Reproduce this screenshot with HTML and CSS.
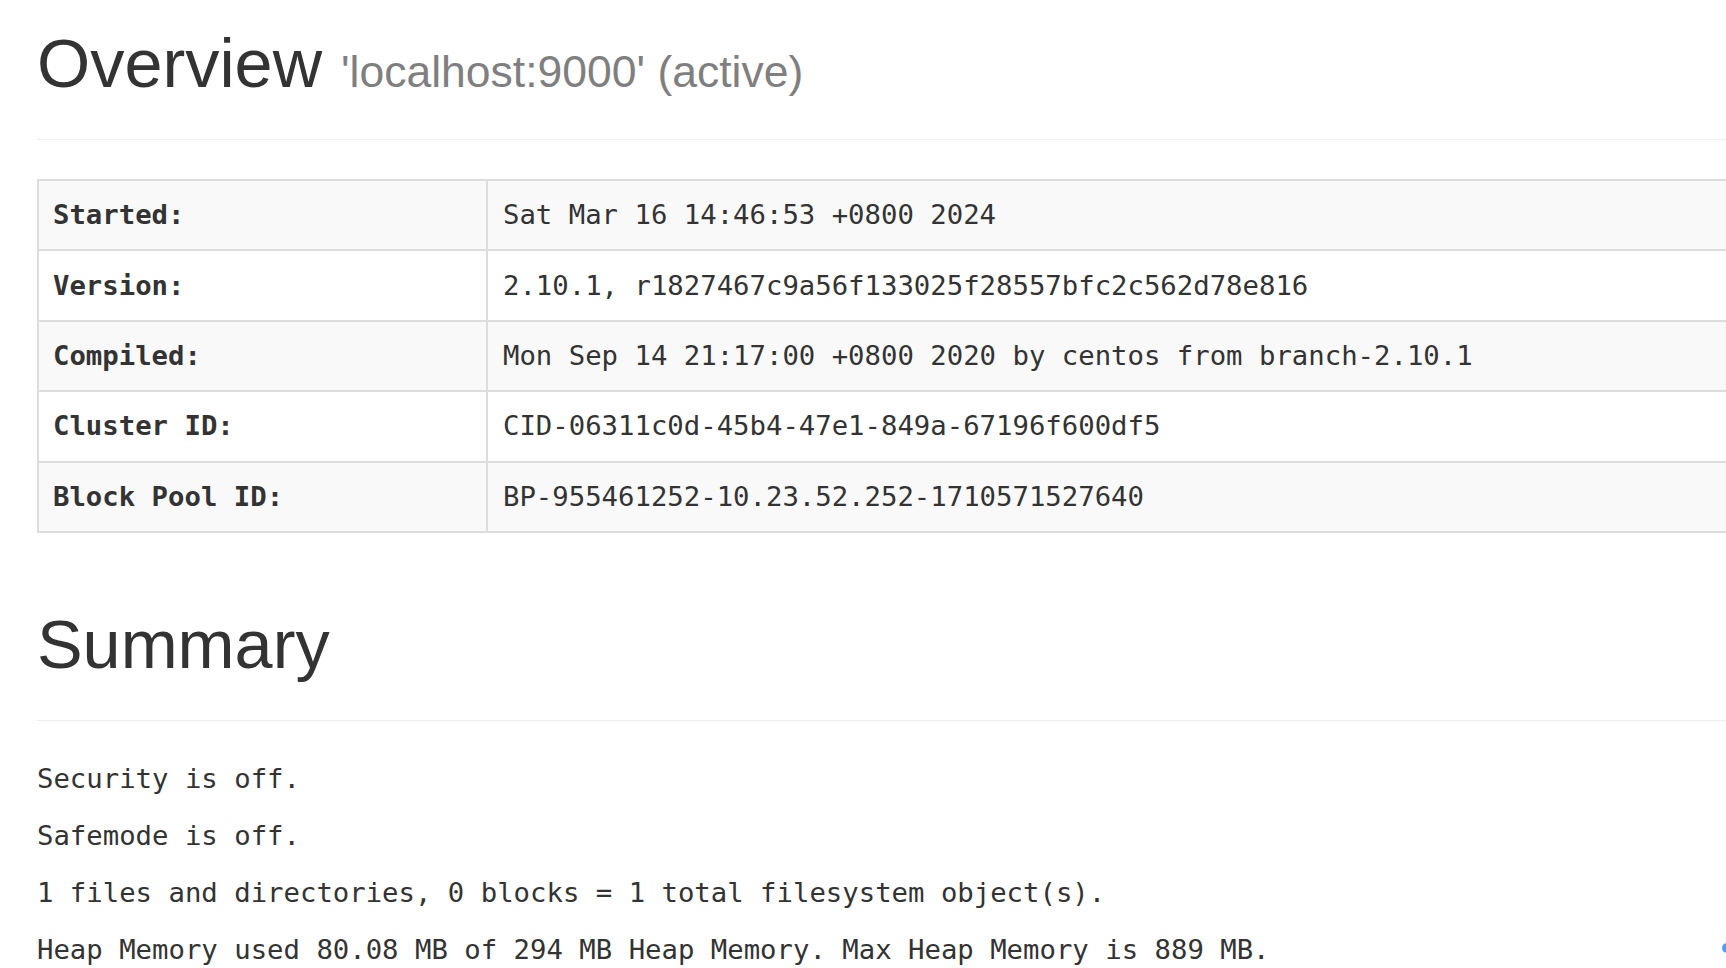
FILE: index.html
```html
<!DOCTYPE html>
<html lang="en">
<head>
    <meta charset="UTF-8">
    <meta name="viewport" content="width=device-width, initial-scale=1.0">
    <title>Namenode information</title>
    <link rel="stylesheet" href="styles.css">
</head>
<body>
    <div class="container">
        <!-- Overview -->
        <div class="page-header first">
            <h1>Overview <small>'localhost:9000' (active)</small></h1>
        </div>

        <table class="info-table">
            <tbody>
                <tr>
                    <th>Started:</th>
                    <td>Sat Mar 16 14:46:53 +0800 2024</td>
                </tr>
                <tr>
                    <th>Version:</th>
                    <td>2.10.1, r1827467c9a56f133025f28557bfc2c562d78e816</td>
                </tr>
                <tr>
                    <th>Compiled:</th>
                    <td>Mon Sep 14 21:17:00 +0800 2020 by centos from branch-2.10.1</td>
                </tr>
                <tr>
                    <th>Cluster ID:</th>
                    <td>CID-06311c0d-45b4-47e1-849a-67196f600df5</td>
                </tr>
                <tr>
                    <th>Block Pool ID:</th>
                    <td>BP-955461252-10.23.52.252-1710571527640</td>
                </tr>
            </tbody>
        </table>

        <!-- Summary -->
        <div class="page-header">
            <h1>Summary</h1>
        </div>

        <p>Security is off.</p>
        <p>Safemode is off.</p>
        <p>1 files and directories, 0 blocks = 1 total filesystem object(s).</p>
        <p>Heap Memory used 80.08 MB of 294 MB Heap Memory. Max Heap Memory is 889 MB.</p>
    </div>

    <div class="float-dot"></div>
</body>
</html>
```

FILE: styles.css
```css
/* Page base */
html, body {
    overflow: hidden;
}
body {
    margin: 0;
    background-color: #fff;
    color: #333;
    font-family: "DejaVu Sans Mono", monospace;
    font-size: 27.3px;
    line-height: 38px;
}
.container {
    width: 1760px;
    padding-left: 37px;
}

/* Section headers */
.page-header {
    margin: 74px 0 39px;
    padding-bottom: 19px;
    border-bottom: 1px solid #eee;
}
.page-header.first {
    margin-top: 26px;
}
h1 {
    margin: 0 0 19px;
    font-family: "Liberation Sans", Arial, sans-serif;
    font-size: 68.4px;
    font-weight: normal;
    line-height: 75px;
    color: #333;
}
h1 small {
    font-size: 44.5px;
    line-height: 1;
    color: #7f7f7f;
}

/* Info table */
.info-table {
    width: 100%;
    border-spacing: 0;
    border-top: 2px solid #ddd;
    border-left: 2px solid #ddd;
}
.info-table th,
.info-table td {
    padding: 15.2px 15px;
    border-right: 2px solid #ddd;
    border-bottom: 2px solid #ddd;
    text-align: left;
    vertical-align: top;
    line-height: 38px;
}
.info-table th {
    width: 418px;
    padding-left: 14px;
    font-weight: bold;
}
.info-table tr:nth-child(odd) {
    background-color: #f9f9f9;
}

/* Summary lines */
p {
    margin: 0 0 19px;
}

/* Floating widget cut off at the right edge */
.float-dot {
    position: fixed;
    top: 943px;
    left: 1722px;
    width: 10px;
    height: 10px;
    border-radius: 50%;
    background-color: #4d9fff;
}
```
